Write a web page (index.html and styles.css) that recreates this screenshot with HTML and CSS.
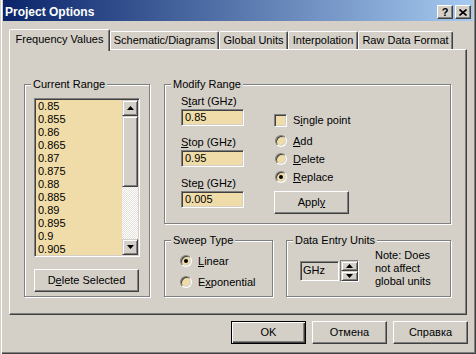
FILE: index.html
```html
<!DOCTYPE html>
<html lang="en">
<head>
    <meta charset="UTF-8">
    <title>Project Options</title>
    <link rel="stylesheet" href="styles.css">
</head>
<body>
    <div class="window">
        <div class="titlebar">
            <span class="title">Project Options</span>
            <div class="caption-buttons">
                <button class="cap-btn help">?</button>
                <button class="cap-btn">
                    <svg width="8" height="7" viewBox="0 0 8 7">
                        <path d="M0.5 0.5 L7.5 6.5 M7.5 0.5 L0.5 6.5" stroke="#000" stroke-width="1.6"/>
                    </svg>
                </button>
            </div>
        </div>

        <div class="client">
            <div class="tabs">
                <div class="tab tab-freq active">Frequency Values</div>
                <div class="tab tab-schem">Schematic/Diagrams</div>
                <div class="tab tab-units">Global Units</div>
                <div class="tab tab-interp">Interpolation</div>
                <div class="tab tab-raw">Raw Data Format</div>
            </div>

            <div class="panel">
                <!-- левая колонка: список частот -->
                <div class="group range-group">
                    <div class="group-label">Current Range</div>
                    <div class="listbox">
                        <ul class="list-items">
                            <li>0.85</li>
                            <li>0.855</li>
                            <li>0.86</li>
                            <li>0.865</li>
                            <li>0.87</li>
                            <li>0.875</li>
                            <li>0.88</li>
                            <li>0.885</li>
                            <li>0.89</li>
                            <li>0.895</li>
                            <li>0.9</li>
                            <li>0.905</li>
                        </ul>
                        <div class="scrollbar">
                            <div class="sb-btn">
                                <svg width="7" height="4" viewBox="0 0 7 4"><polygon points="3.5,0 7,4 0,4" fill="#000"/></svg>
                            </div>
                            <div class="sb-thumb"></div>
                            <div class="sb-track"></div>
                            <div class="sb-btn">
                                <svg width="7" height="4" viewBox="0 0 7 4"><polygon points="0,0 7,0 3.5,4" fill="#000"/></svg>
                            </div>
                        </div>
                    </div>
                    <button class="btn delete-btn">D<u>e</u>lete Selected</button>
                </div>

                <!-- правая колонка -->
                <div class="right-col">
                    <div class="group modify-group">
                        <div class="group-label">Modify Range</div>
                        <div class="modify-body">
                            <div class="fields">
                                <div class="field-block">
                                    <div class="field-label">S<u>t</u>art (GHz)</div>
                                    <div class="field">0.85</div>
                                </div>
                                <div class="field-block">
                                    <div class="field-label"><u>S</u>top (GHz)</div>
                                    <div class="field">0.95</div>
                                </div>
                                <div class="field-block">
                                    <div class="field-label">Ste<u>p</u> (GHz)</div>
                                    <div class="field">0.005</div>
                                </div>
                            </div>
                            <div class="options">
                                <div class="option-row first">
                                    <span class="checkbox"></span>
                                    <span>S<u>i</u>ngle point</span>
                                </div>
                                <div class="option-row">
                                    <span class="radio"></span>
                                    <span><u>A</u>dd</span>
                                </div>
                                <div class="option-row">
                                    <span class="radio"></span>
                                    <span><u>D</u>elete</span>
                                </div>
                                <div class="option-row">
                                    <span class="radio checked"></span>
                                    <span><u>R</u>eplace</span>
                                </div>
                                <button class="btn apply-btn">Appl<u>y</u></button>
                            </div>
                        </div>
                    </div>

                    <div class="bottom-groups">
                        <div class="group sweep-group">
                            <div class="group-label">Sweep Type</div>
                            <div class="sweep-body">
                                <div class="option-row">
                                    <span class="radio checked"></span>
                                    <span><u>L</u>inear</span>
                                </div>
                                <div class="option-row">
                                    <span class="radio"></span>
                                    <span>E<u>x</u>ponential</span>
                                </div>
                            </div>
                        </div>

                        <div class="group units-group">
                            <div class="group-label">Data Entry Units</div>
                            <div class="units-body">
                                <div class="unit-box">GHz</div>
                                <div class="spin">
                                    <div class="spin-btn">
                                        <svg width="7" height="4" viewBox="0 0 7 4"><polygon points="3.5,0 7,4 0,4" fill="#000"/></svg>
                                    </div>
                                    <div class="spin-btn">
                                        <svg width="7" height="4" viewBox="0 0 7 4"><polygon points="0,0 7,0 3.5,4" fill="#000"/></svg>
                                    </div>
                                </div>
                                <div class="note">Note: Does<br>not affect<br>global units</div>
                            </div>
                        </div>
                    </div>
                </div>
            </div>

            <div class="actions">
                <button class="btn default-btn">OK</button>
                <button class="btn">Отмена</button>
                <button class="btn">Справка</button>
            </div>
        </div>
    </div>
</body>
</html>
```

FILE: styles.css
```css
* {
    margin: 0;
    padding: 0;
    box-sizing: border-box;
}

body {
    width: 476px;
    height: 354px;
    overflow: hidden;
    background-color: #d4d0c8;
    font-family: 'Liberation Sans', Arial, sans-serif;
    font-size: 11px;
    line-height: 13px;
    color: #000000;
}

button {
    font: inherit;
    color: inherit;
}

u {
    text-decoration: underline;
    text-underline-offset: 1px;
}

.window {
    width: 476px;
    height: 354px;
    padding: 0 3px 3px 3px;
    background-color: #d4d0c8;
    box-shadow: inset 1px 0 0 #d4d0c8, inset 2px 0 0 #ffffff,
                inset -1px -1px 0 #404040, inset -2px -2px 0 #808080;
}

/* заголовок окна */
.titlebar {
    height: 21px;
    display: flex;
    align-items: flex-end;
    justify-content: space-between;
    padding: 0 2px 2px 2px;
    background: linear-gradient(to right, #0a246a, #a6caf0);
}

.title {
    color: #ffffff;
    font-size: 12px;
    font-weight: bold;
    line-height: 14px;
}

.caption-buttons {
    display: flex;
    gap: 2px;
}

.cap-btn {
    width: 16px;
    height: 14px;
    display: flex;
    align-items: center;
    justify-content: center;
    background-color: #d4d0c8;
    border: 1px solid;
    border-color: #ffffff #404040 #404040 #ffffff;
    box-shadow: inset -1px -1px 0 #808080;
    font-weight: bold;
    font-size: 11px;
    line-height: 11px;
}

.client {
    padding: 8px 6px 0 6px;
}

/* вкладки */
.tabs {
    height: 20px;
    display: flex;
    align-items: flex-end;
}

.tab {
    height: 18px;
    padding-top: 2px;
    text-align: center;
    white-space: nowrap;
    border: 1px solid;
    border-bottom: none;
    border-color: #ffffff #404040 transparent #ffffff;
    border-radius: 2px 2px 0 0;
    box-shadow: inset -1px 0 0 #808080;
}

.tab.active {
    position: relative;
    z-index: 1;
    height: 22px;
    padding-top: 3px;
    margin-bottom: -2px;
    background-color: #d4d0c8;
}

.tab-freq { width: 101px; }
.tab-schem { width: 109px; }
.tab-units { width: 69px; }
.tab-interp { width: 70px; }
.tab-raw { width: 95px; }

.panel {
    width: 458px;
    height: 266px;
    display: grid;
    grid-template-columns: 126px 287px;
    column-gap: 14px;
    align-items: start;
    padding: 34px 0 0 14px;
    border: 1px solid;
    border-color: #ffffff #404040 #404040 #ffffff;
    box-shadow: inset -1px -1px 0 #808080;
}

/* рамки групп */
.group {
    border: 1px solid #808080;
    box-shadow: inset 1px 1px 0 #ffffff, 1px 1px 0 #ffffff;
}

.group-label {
    width: fit-content;
    margin: -7px 0 0 6px;
    padding: 0 2px;
    background-color: #d4d0c8;
}

.range-group {
    height: 213px;
}

.listbox {
    width: 106px;
    height: 159px;
    margin: 7px 0 0 9px;
    display: flex;
    overflow: hidden;
    background-color: #f0dca8;
    border: 1px solid;
    border-color: #808080 #ffffff #ffffff #808080;
    box-shadow: inset 1px 1px 0 #404040, inset -1px -1px 0 #d4d0c8;
    padding: 1px;
}

.list-items {
    flex: 1;
    list-style: none;
    padding-left: 2px;
    overflow: hidden;
}

.scrollbar {
    width: 16px;
    display: flex;
    flex-direction: column;
}

.sb-btn,
.sb-thumb,
.spin-btn {
    background-color: #d4d0c8;
    border: 1px solid;
    border-color: #d4d0c8 #404040 #404040 #d4d0c8;
    box-shadow: inset 1px 1px 0 #ffffff, inset -1px -1px 0 #808080;
}

.sb-btn {
    height: 16px;
    display: flex;
    align-items: center;
    justify-content: center;
}

.sb-thumb {
    height: 71px;
}

.sb-track {
    flex: 1;
    background: repeating-conic-gradient(#ffffff 0 25%, #e4e1db 0 50%) 0 0 / 2px 2px;
}

/* кнопки */
.btn {
    width: 75px;
    height: 23px;
    background-color: #d4d0c8;
    border: 1px solid;
    border-color: #ffffff #404040 #404040 #ffffff;
    box-shadow: inset -1px -1px 0 #808080;
}

.delete-btn {
    width: 105px;
    margin: 12px 0 0 9px;
}

.default-btn {
    border: 1px solid #000000;
    box-shadow: inset 1px 1px 0 #ffffff, inset -1px -1px 0 #404040, inset -2px -2px 0 #808080;
}

.right-col {
    display: flex;
    flex-direction: column;
    gap: 16px;
}

.modify-group {
    height: 140px;
}

.modify-body {
    display: grid;
    grid-template-columns: 63px auto;
    column-gap: 30px;
    margin: 4px 0 0 16px;
}

.fields {
    display: flex;
    flex-direction: column;
    gap: 10px;
}

.field-label {
    margin-bottom: 1px;
}

.field {
    height: 17px;
    padding: 1px 3px;
    background-color: #f0dca8;
    border: 1px solid;
    border-color: #808080 #ffffff #ffffff #808080;
    box-shadow: inset 1px 1px 0 #404040, inset -1px -1px 0 #d4d0c8;
}

.options {
    padding-top: 16px;
}

.option-row {
    height: 18px;
    display: flex;
    align-items: center;
    gap: 6px;
}

.option-row.first {
    margin-bottom: 3px;
}

.checkbox,
.radio {
    flex-shrink: 0;
    background-color: #f0dca8;
    border: 1px solid;
    border-color: #808080 #ffffff #ffffff #808080;
    box-shadow: inset 1px 1px 0 #404040, inset -1px -1px 0 #d4d0c8;
}

.checkbox {
    width: 13px;
    height: 13px;
}

.radio {
    width: 12px;
    height: 12px;
    margin-left: 1px;
    border-radius: 50%;
    display: flex;
    align-items: center;
    justify-content: center;
}

.radio.checked::after {
    content: '';
    width: 4px;
    height: 4px;
    border-radius: 50%;
    background-color: #000000;
}

.apply-btn {
    margin-top: 5px;
}

.bottom-groups {
    display: flex;
    gap: 13px;
}

.sweep-group {
    width: 109px;
    height: 57px;
}

.sweep-body {
    display: flex;
    flex-direction: column;
    gap: 3px;
    margin: 5px 0 0 14px;
}

.units-group {
    width: 165px;
    height: 57px;
}

.units-body {
    display: flex;
    align-items: flex-start;
    margin-left: 13px;
}

.unit-box {
    width: 39px;
    height: 20px;
    margin-top: 14px;
    padding: 2px 2px;
    border: 1px solid;
    border-color: #808080 #ffffff #ffffff #808080;
    box-shadow: inset 1px 1px 0 #404040, inset -1px -1px 0 #d4d0c8;
}

.spin {
    width: 19px;
    height: 22px;
    margin: 13px 0 0 1px;
    display: flex;
    flex-direction: column;
    border: 1px solid;
    border-color: #808080 #ffffff #ffffff #808080;
}

.spin-btn {
    flex: 1;
    display: flex;
    align-items: center;
    justify-content: center;
}

.note {
    margin: 2px 0 0 16px;
}

/* нижние кнопки */
.actions {
    display: flex;
    justify-content: flex-end;
    gap: 6px;
    margin: 6px -1px 0 0;
}
```
